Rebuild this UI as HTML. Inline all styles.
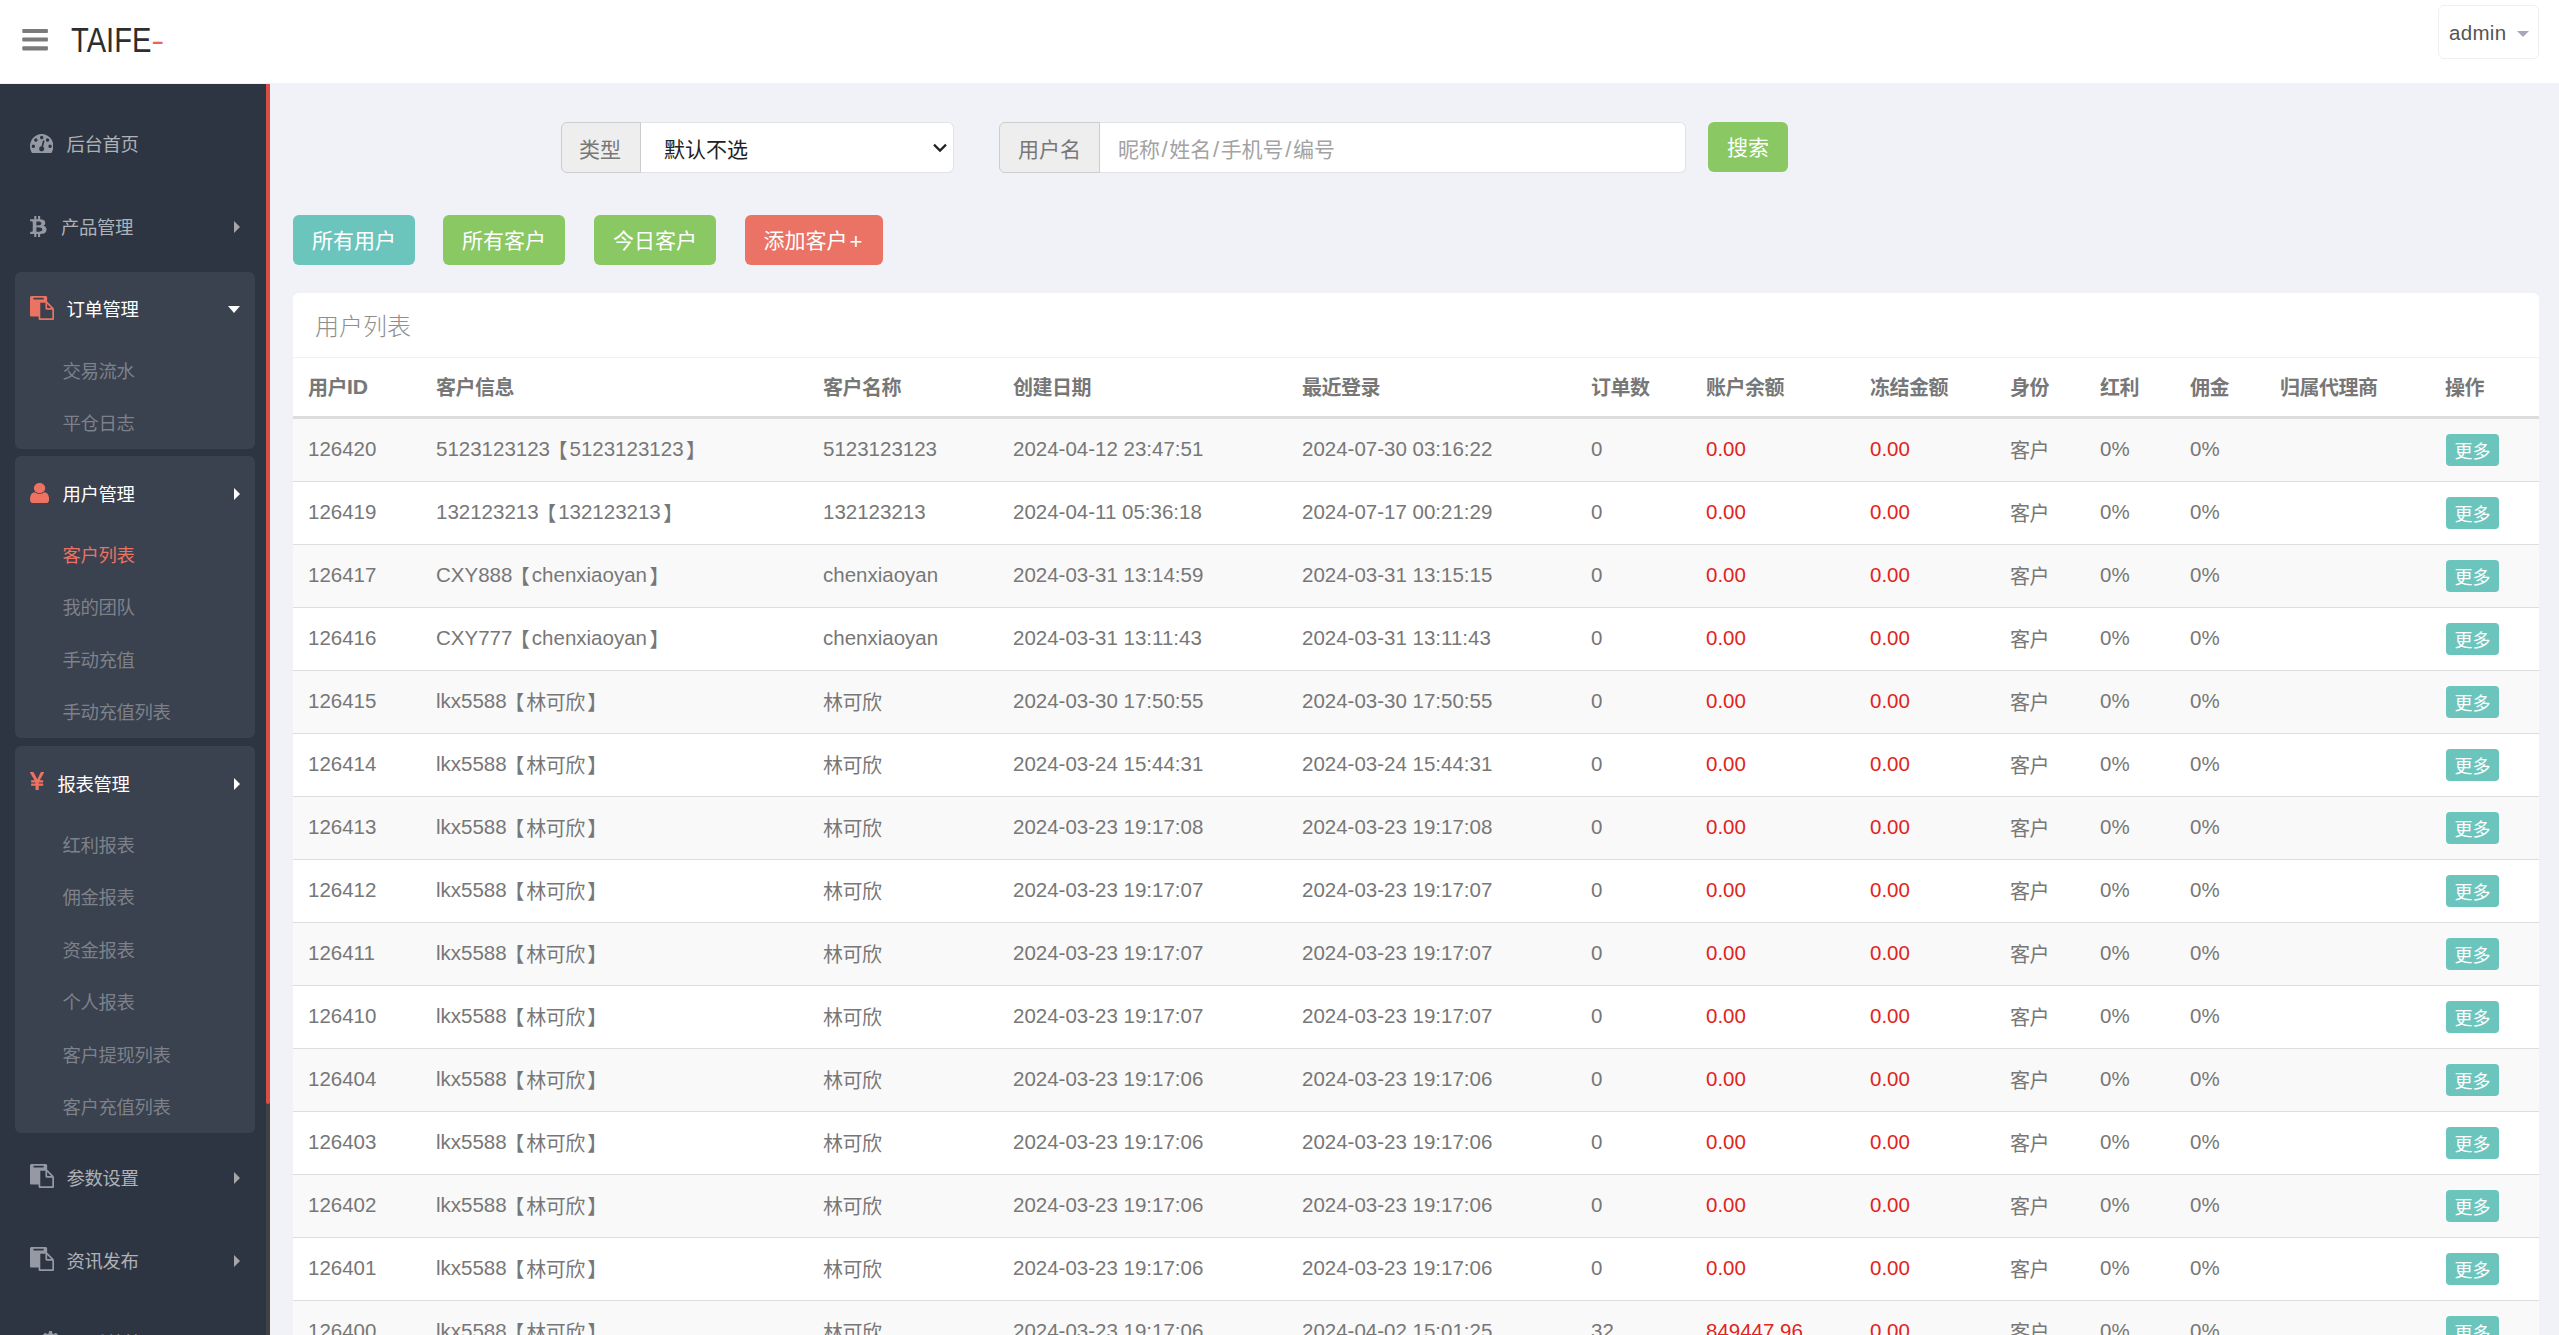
<!DOCTYPE html>
<html lang="zh-CN"><head><meta charset="utf-8"><title>TAIFE</title>
<style>
*{box-sizing:border-box}
html,body{margin:0;padding:0}
body{width:2559px;height:1335px;overflow:hidden;position:relative;background:#f1f2f7;color:#777;
 font-family:"Liberation Sans","Noto Sans CJK SC",sans-serif;font-size:19.5px}
#hd{position:absolute;left:0;top:0;width:2559px;height:83px;background:#fff}
#bars{position:absolute;left:22.3px;top:28.7px;width:26px;height:22px}
#bars i{position:absolute;left:0;width:26px;height:4.3px;background:#7b7b7b;border-radius:1px}
#logo{position:absolute;left:71px;top:16.5px;font-size:34.5px;line-height:46px;color:#2e2e2e;white-space:nowrap;transform:scaleX(.845);transform-origin:0 0;letter-spacing:0}
#logo b{font-weight:normal;color:#ec6459;display:inline-block;transform:translateY(-1.2px) scale(1.34,.8);transform-origin:0 62%;margin-left:.1px}
#adm{position:absolute;left:2438px;top:5px;width:101px;height:54px;border:1px solid #eeeff3;border-radius:6px;background:#fff}
#adm span{position:absolute;left:10px;top:11px;font-size:20.5px;line-height:32px;color:#555;letter-spacing:.3px}
#adm i{position:absolute;left:78px;top:25px;border:6px solid transparent;border-top:6px solid #a5a8b8;border-bottom:0}
#sb{position:absolute;left:0;top:84px;width:270px;height:1251px;background:#2e3542;overflow:hidden;font-size:18.4px;letter-spacing:-.4px}
#rail{position:absolute;left:266px;top:0;width:4px;height:1252px;background:#424242}
#thumb{position:absolute;left:266px;top:0;width:4px;height:1020px;background:#d84e44;border-radius:0 0 2px 2px}
.li{position:absolute;left:15px;width:240px;border-radius:6px;color:#aeb2b7}
.li.open{background:#3a414f;color:#fff}
.ic{position:absolute}
.t{position:absolute;top:25.7px;margin-left:.6px;line-height:26px;white-space:nowrap}
.s{position:absolute;left:47.5px;line-height:26px;margin-top:14.9px;color:#7d818a;white-space:nowrap}
.s.act{color:#ec7262}
.ar{position:absolute;left:219px;top:31.5px;border:6px solid transparent;border-left:6.5px solid #a6a6a6;border-right:0}
.ad{position:absolute;left:213px;top:34px;border:6.2px solid transparent;border-top:7.4px solid #fff;border-bottom:0}
.ig{position:absolute;top:122px;height:51px;font-size:21px}
.ig .ad2{position:absolute;left:0;top:0;height:51px;background:#eee;border:1px solid #ccc;border-radius:6px 0 0 6px;color:#777;text-align:center;line-height:53px}
.ig .fc{position:absolute;top:0;height:51px;background:#fff;border:1px solid #e2e2e4;border-left:0;border-radius:0 6px 6px 0;line-height:53px;white-space:nowrap}
.btn{position:absolute;height:50px;border-radius:6px;color:#fff;font-size:21px;line-height:51px;text-align:center;white-space:nowrap}
#pn{position:absolute;left:293px;top:293px;width:2246px;height:1100px;background:#fff;border-radius:6px 6px 0 0}
#ph{position:absolute;left:0;top:0;width:2246px;height:65px;border-bottom:1px solid #eff2f7;font-size:24px;line-height:68px;padding-left:22px;color:#8e8e8e;font-weight:300}
table{position:absolute;left:0;top:65px;width:2246px;border-collapse:collapse;table-layout:fixed}
th,td{padding:0 0 0 15px;text-align:left;white-space:nowrap;overflow:hidden;line-height:28px;font-size:20px;letter-spacing:-.5px}
th{height:59.5px;padding-top:1px;border-bottom:3px solid #ddd;font-weight:bold;color:#777;vertical-align:middle}
td{height:63px;border-top:1px solid #ddd;vertical-align:middle;padding-top:2.4px}
tbody tr:first-child td{border-top:0;height:63.5px}
tbody tr:nth-child(odd) td{background:#f9f9f9}
.bl{margin-left:-2.5px;margin-right:2.5px}.br{margin-left:2.5px}
.sl{font-size:22px;margin:0 1.6px}
.l{font-size:20.5px;line-height:1px;position:relative;top:-2.2px;letter-spacing:0}
th .l{top:-.3px;font-size:21px;-webkit-text-stroke:.15px #777}
td.r{color:#e2241d}
.more{position:relative;left:1px;top:-.7px;display:inline-block;width:53px;height:32px;border-radius:4px;background:#6cc5bd;color:#fff;font-size:18px;line-height:37px;text-align:center;vertical-align:middle;letter-spacing:0}
</style></head><body>
<div id="hd">
 <svg id="bars" viewBox="0 0 26 22"><rect x="0.3" y="0" width="25.6" height="4.1" rx=".8" fill="#7b7b7b"/><rect x="0.3" y="8.55" width="25.6" height="4" rx=".8" fill="#7b7b7b"/><rect x="0.3" y="17.3" width="25.6" height="4.1" rx=".8" fill="#7b7b7b"/></svg>
 <div id="logo">TAIFE<b>-</b></div>
 <div id="adm"><span>admin</span><i></i></div>
</div>
<div id="sb">
<div style="position:absolute;left:0;top:-84px;width:270px">
<div class="li" style="top:107px;height:75px"><svg class="ic" style="left:14.8px;top:27px" width="23.4" height="19.2" viewBox="0 256 1792 1408" preserveAspectRatio="none"><path fill="#9599a3" d="M384 1152q0-53-37.500-90.500t-90.500-37.500-90.500 37.500-37.500 90.500 37.500 90.500 90.500 37.500 90.500-37.500 37.500-90.500zm192-448q0-53-37.500-90.500t-90.500-37.500-90.500 37.500-37.500 90.500 37.500 90.500 90.500 37.500 90.500-37.500 37.500-90.500zm428 481l101-382q6-26-7.500-48.500t-38.500-29.500-48 6.500-30 39.500l-101 382q-60 5-107 43.500t-63 98.500q-20 77 20 146t117 89 146-20 89-117q16-60-6-117t-72-91zm660-33q0-53-37.500-90.500t-90.500-37.500-90.500 37.500-37.500 90.500 37.500 90.500 90.500 37.500 90.500-37.500 37.500-90.500zm-640-640q0-53-37.500-90.500t-90.500-37.500-90.500 37.500-37.500 90.500 37.500 90.500 90.500 37.500 90.500-37.500 37.500-90.500zm448 192q0-53-37.500-90.500t-90.500-37.500-90.500 37.500-37.500 90.500 37.500 90.500 90.500 37.500 90.500-37.500 37.500-90.500zm320 448q0 261-141 483-19 29-54 29h-1402q-35 0-54-29-141-221-141-483 0-182 71-348t191-286 286-191 348-71 348 71 286 191 191 286 71 348z"/></svg><span class="t" style="left:51px;margin-top:-0.5px">后台首页</span></div>
<div class="li" style="top:189.5px;height:75px"><svg class="ic" style="left:15.100000000000001px;top:26.3px" width="16.5" height="21.3" viewBox="56 384 1202.4 1664" preserveAspectRatio="none"><path fill="#9599a3" d="M1167 896q18 182-131 258 117 28 175 103t45 214q-7 71-32.500 125t-64.500 89-97 58.500-121.500 34.500-145.500 15v255h-154v-251q-80 0-122-1v252h-154v-255q-18 0-54-.5t-55-.5h-200l31-183h111q50 0 58-51v-402h16q-6-1-16-1v-287q-13-68-89-68h-111v-164l212 1q64 0 97-1v-252h154v247q82-2 122-2v-245h154v252q79 7 140 22.500t113 45 82.500 78 36.500 114.500zm-215 545q0-36-15-64t-37-46-57.500-30.500-65.500-18.500-74-9-69-3-64.500 1-47.500 1v338q8 0 37 .5t48 .5 53-1.500 58.500-4 57-8.500 55.500-14 47.500-21 39.500-30 24.500-40 9.500-51zm-71-476q0-33-12.500-58.500t-30.500-42-48-28-55-16.500-61.500-8-58-2.500-54 1-39.500.5v307q5 0 34.500.5t46.500 0 50-2 55-5.500 51.500-11 48.500-18.500 37-27 27-38.500 9-51z"/></svg><span class="t" style="left:45.5px">产品管理</span><i class="ar" style="border-left-color:#a6a6a6"></i></div>
<div class="li open" style="top:272px;height:177.0px"><svg class="ic" style="left:14.899999999999999px;top:23.8px" width="24" height="24" viewBox="0 0 1792 1792" preserveAspectRatio="none"><path fill="#ec7262" d="M768 1664h896v-640h-416q-40 0-68-28t-28-68v-416h-384v1152zm256-1440v-64q0-13-9.500-22.500t-22.500-9.500h-704q-13 0-22.500 9.500t-9.500 22.500v64q0 13 9.500 22.500t22.500 9.500h704q13 0 22.500-9.500t9.500-22.500zm256 672h299l-299-299v299zm512 128v672q0 40-28 68t-68 28h-960q-40 0-68-28t-28-68v-160h-544q-40 0-68-28t-28-68v-1344q0-40 28-68t68-28h1088q40 0 68 28t28 68v328q21 13 36 28l408 408q28 28 48 76t20 88z"/></svg><span class="t" style="left:51px;margin-top:-0.5px">订单管理</span><i class="ad"></i><span class="s" style="top:72.0px">交易流水</span><span class="s" style="top:124.5px">平仓日志</span></div>
<div class="li open" style="top:456px;height:282.0px"><svg class="ic" style="left:14.899999999999999px;top:26.8px" width="19.1" height="20.4" viewBox="256 128 1280 1536" preserveAspectRatio="none"><path fill="#ec7262" d="M1536 1399q0 109-62.500 187t-150.500 78h-854q-88 0-150.500-78t-62.500-187q0-85 8.500-160.500t31.500-152 58.500-131 94-89 134.500-34.500q131 128 313 128t313-128q76 0 134.500 34.500t94 89 58.500 131 31.500 152 8.500 160.500zm-256-887q0 159-112.500 271.500t-271.500 112.500-271.500-112.500-112.500-271.500 112.500-271.500 271.500-112.500 271.500 112.500 112.500 271.500z"/></svg><span class="t" style="left:47px">用户管理</span><i class="ar" style="border-left-color:#fff"></i><span class="s act" style="top:72.0px">客户列表</span><span class="s" style="top:124.5px">我的团队</span><span class="s" style="top:177.0px">手动充值</span><span class="s" style="top:229.5px">手动充值列表</span></div>
<div class="li open" style="top:746px;height:387.0px"><svg class="ic" style="left:14.899999999999999px;top:25.6px" width="14.2" height="18.5" viewBox="382.5 128 1026.8 1408" preserveAspectRatio="none"><path fill="#ec7262" d="M985.500 1536h-172q-13 0-22.500-9t-9.500-23v-330h-288q-13 0-22.500-9t-9.500-23v-103q0-13 9.500-22.500t22.500-9.500h288v-85h-288q-13 0-22.500-9t-9.500-23v-104q0-13 9.500-22.500t22.500-9.500h214l-321-578q-8-16 0-32 10-16 28-16h194q19 0 29 18l215 425q19 38 56 125 10-24 30.500-68t27.500-61l191-420q8-19 29-19h191q17 0 27 16 9 14 1 31l-313 579h215q13 0 22.500 9.500t9.500 22.500v104q0 14-9.500 23t-22.500 9h-290v85h290q13 0 22.500 9.500t9.500 22.500v103q0 14-9.500 23t-22.500 9h-290v330q0 13-9.500 22.500t-22.500 9.500z"/></svg><span class="t" style="left:42px">报表管理</span><i class="ar" style="border-left-color:#fff"></i><span class="s" style="top:72.0px">红利报表</span><span class="s" style="top:124.5px">佣金报表</span><span class="s" style="top:177.0px">资金报表</span><span class="s" style="top:229.5px">个人报表</span><span class="s" style="top:282.0px">客户提现列表</span><span class="s" style="top:334.5px">客户充值列表</span></div>
<div class="li" style="top:1140.5px;height:75px"><svg class="ic" style="left:14.899999999999999px;top:23.8px" width="24" height="24" viewBox="0 0 1792 1792" preserveAspectRatio="none"><path fill="#9599a3" d="M768 1664h896v-640h-416q-40 0-68-28t-28-68v-416h-384v1152zm256-1440v-64q0-13-9.500-22.500t-22.500-9.500h-704q-13 0-22.500 9.500t-9.500 22.500v64q0 13 9.500 22.500t22.500 9.500h704q13 0 22.500-9.500t9.500-22.500zm256 672h299l-299-299v299zm512 128v672q0 40-28 68t-68 28h-960q-40 0-68-28t-28-68v-160h-544q-40 0-68-28t-28-68v-1344q0-40 28-68t68-28h1088q40 0 68 28t28 68v328q21 13 36 28l408 408q28 28 48 76t20 88z"/></svg><span class="t" style="left:51px">参数设置</span><i class="ar" style="border-left-color:#a6a6a6"></i></div>
<div class="li" style="top:1223px;height:75px"><svg class="ic" style="left:14.899999999999999px;top:23.8px" width="24" height="24" viewBox="0 0 1792 1792" preserveAspectRatio="none"><path fill="#9599a3" d="M768 1664h896v-640h-416q-40 0-68-28t-28-68v-416h-384v1152zm256-1440v-64q0-13-9.500-22.500t-22.500-9.500h-704q-13 0-22.500 9.500t-9.500 22.500v64q0 13 9.500 22.500t22.500 9.500h704q13 0 22.500-9.500t9.500-22.500zm256 672h299l-299-299v299zm512 128v672q0 40-28 68t-68 28h-960q-40 0-68-28t-28-68v-160h-544q-40 0-68-28t-28-68v-1344q0-40 28-68t68-28h1088q40 0 68 28t28 68v328q21 13 36 28l408 408q28 28 48 76t20 88z"/></svg><span class="t" style="left:51px">资讯发布</span><i class="ar" style="border-left-color:#a6a6a6"></i></div>
<div class="li" style="top:1305.5px;height:75px"><svg class="ic" style="left:25.5px;top:25px" width="19" height="19" viewBox="0 0 24 24" preserveAspectRatio="none"><path fill="#9599a3" d="M10.2 0h3.6l.5 3.1 2 .8 2.6-1.800 2.500 2.500-1.800 2.600.800 2 3.100.500v3.600l-3.100.500-.800 2 1.800 2.600-2.500 2.500-2.600-1.800-2 .800-.500 3.100h-3.600l-.500-3.100-2-.800-2.600 1.800-2.500-2.500 1.800-2.600-.800-2-3.100-.500v-3.600l3.100-.500.800-2-1.800-2.600 2.500-2.500 2.600 1.800 2-.800zM12 8a4 4 0 1 0 0 8 4 4 0 0 0 0-8z"/></svg><span class="t" style="left:73px">系统管理</span><i class="ar" style="border-left-color:#a6a6a6"></i></div>
</div>
<div id="rail"></div><div id="thumb"></div>
</div>
<div class="ig" style="left:561px;width:393px"><div class="ad2" style="width:80px;text-indent:-2px">类型</div><div class="fc" style="left:80px;width:313px;padding-left:23px;color:#222">默认不选<svg style="position:absolute;left:292px;top:20px" width="14" height="10" viewBox="0 0 14 10"><path d="M1 1.6 L7 7.6 L13 1.6" fill="none" stroke="#222" stroke-width="2.2"/></svg></div></div>
<div class="ig" style="left:999px;width:687px"><div class="ad2" style="width:101px">用户名</div><div class="fc" style="left:101px;width:586px;padding-left:18px;color:#a3a3a3">昵称<span class="sl">/</span>姓名<span class="sl">/</span>手机号<span class="sl">/</span>编号</div></div>
<div class="btn" style="left:1708px;top:122px;width:80px;background:#8ac863;line-height:52px">搜索</div>
<div class="btn" style="left:293px;top:215px;width:122px;background:#6cc5bd">所有用户</div>
<div class="btn" style="left:443px;top:215px;width:122px;background:#8ac863">所有客户</div>
<div class="btn" style="left:594px;top:215px;width:122px;background:#8ac863">今日客户</div>
<div class="btn" style="left:745px;top:215px;width:138px;background:#ea7366;text-align:left;padding-left:18.5px">添加客户<span style="font-size:22px;margin-left:2px;position:relative;top:1px">+</span></div>
<div id="pn"><div id="ph">用户列表</div>
<table><colgroup><col style="width:128px"><col style="width:387px"><col style="width:190px"><col style="width:289px"><col style="width:289px"><col style="width:115px"><col style="width:164px"><col style="width:140px"><col style="width:90px"><col style="width:90px"><col style="width:90px"><col style="width:165px"><col style="width:109px"></colgroup>
<thead><tr><th>用户<span class="l">ID</span></th><th>客户信息</th><th>客户名称</th><th>创建日期</th><th>最近登录</th><th>订单数</th><th>账户余额</th><th>冻结金额</th><th>身份</th><th>红利</th><th>佣金</th><th>归属代理商</th><th>操作</th></tr></thead>
<tbody>
<tr><td><span class="l">126420</span></td><td><span class="l">5123123123</span><span class="bl">【</span><span class=l>5123123123</span><span class="br">】</span></td><td><span class="l">5123123123</span></td><td><span class="l">2024-04-12 23:47:51</span></td><td><span class="l">2024-07-30 03:16:22</span></td><td><span class="l">0</span></td><td class="r"><span class="l">0.00</span></td><td class="r"><span class="l">0.00</span></td><td>客户</td><td><span class="l">0%</span></td><td><span class="l">0%</span></td><td></td><td><a class="more">更多</a></td></tr>
<tr><td><span class="l">126419</span></td><td><span class="l">132123213</span><span class="bl">【</span><span class=l>132123213</span><span class="br">】</span></td><td><span class="l">132123213</span></td><td><span class="l">2024-04-11 05:36:18</span></td><td><span class="l">2024-07-17 00:21:29</span></td><td><span class="l">0</span></td><td class="r"><span class="l">0.00</span></td><td class="r"><span class="l">0.00</span></td><td>客户</td><td><span class="l">0%</span></td><td><span class="l">0%</span></td><td></td><td><a class="more">更多</a></td></tr>
<tr><td><span class="l">126417</span></td><td><span class="l">CXY888</span><span class="bl">【</span><span class=l>chenxiaoyan</span><span class="br">】</span></td><td><span class="l">chenxiaoyan</span></td><td><span class="l">2024-03-31 13:14:59</span></td><td><span class="l">2024-03-31 13:15:15</span></td><td><span class="l">0</span></td><td class="r"><span class="l">0.00</span></td><td class="r"><span class="l">0.00</span></td><td>客户</td><td><span class="l">0%</span></td><td><span class="l">0%</span></td><td></td><td><a class="more">更多</a></td></tr>
<tr><td><span class="l">126416</span></td><td><span class="l">CXY777</span><span class="bl">【</span><span class=l>chenxiaoyan</span><span class="br">】</span></td><td><span class="l">chenxiaoyan</span></td><td><span class="l">2024-03-31 13:11:43</span></td><td><span class="l">2024-03-31 13:11:43</span></td><td><span class="l">0</span></td><td class="r"><span class="l">0.00</span></td><td class="r"><span class="l">0.00</span></td><td>客户</td><td><span class="l">0%</span></td><td><span class="l">0%</span></td><td></td><td><a class="more">更多</a></td></tr>
<tr><td><span class="l">126415</span></td><td><span class="l">lkx5588</span><span class="bl">【</span>林可欣<span class="br">】</span></td><td>林可欣</td><td><span class="l">2024-03-30 17:50:55</span></td><td><span class="l">2024-03-30 17:50:55</span></td><td><span class="l">0</span></td><td class="r"><span class="l">0.00</span></td><td class="r"><span class="l">0.00</span></td><td>客户</td><td><span class="l">0%</span></td><td><span class="l">0%</span></td><td></td><td><a class="more">更多</a></td></tr>
<tr><td><span class="l">126414</span></td><td><span class="l">lkx5588</span><span class="bl">【</span>林可欣<span class="br">】</span></td><td>林可欣</td><td><span class="l">2024-03-24 15:44:31</span></td><td><span class="l">2024-03-24 15:44:31</span></td><td><span class="l">0</span></td><td class="r"><span class="l">0.00</span></td><td class="r"><span class="l">0.00</span></td><td>客户</td><td><span class="l">0%</span></td><td><span class="l">0%</span></td><td></td><td><a class="more">更多</a></td></tr>
<tr><td><span class="l">126413</span></td><td><span class="l">lkx5588</span><span class="bl">【</span>林可欣<span class="br">】</span></td><td>林可欣</td><td><span class="l">2024-03-23 19:17:08</span></td><td><span class="l">2024-03-23 19:17:08</span></td><td><span class="l">0</span></td><td class="r"><span class="l">0.00</span></td><td class="r"><span class="l">0.00</span></td><td>客户</td><td><span class="l">0%</span></td><td><span class="l">0%</span></td><td></td><td><a class="more">更多</a></td></tr>
<tr><td><span class="l">126412</span></td><td><span class="l">lkx5588</span><span class="bl">【</span>林可欣<span class="br">】</span></td><td>林可欣</td><td><span class="l">2024-03-23 19:17:07</span></td><td><span class="l">2024-03-23 19:17:07</span></td><td><span class="l">0</span></td><td class="r"><span class="l">0.00</span></td><td class="r"><span class="l">0.00</span></td><td>客户</td><td><span class="l">0%</span></td><td><span class="l">0%</span></td><td></td><td><a class="more">更多</a></td></tr>
<tr><td><span class="l">126411</span></td><td><span class="l">lkx5588</span><span class="bl">【</span>林可欣<span class="br">】</span></td><td>林可欣</td><td><span class="l">2024-03-23 19:17:07</span></td><td><span class="l">2024-03-23 19:17:07</span></td><td><span class="l">0</span></td><td class="r"><span class="l">0.00</span></td><td class="r"><span class="l">0.00</span></td><td>客户</td><td><span class="l">0%</span></td><td><span class="l">0%</span></td><td></td><td><a class="more">更多</a></td></tr>
<tr><td><span class="l">126410</span></td><td><span class="l">lkx5588</span><span class="bl">【</span>林可欣<span class="br">】</span></td><td>林可欣</td><td><span class="l">2024-03-23 19:17:07</span></td><td><span class="l">2024-03-23 19:17:07</span></td><td><span class="l">0</span></td><td class="r"><span class="l">0.00</span></td><td class="r"><span class="l">0.00</span></td><td>客户</td><td><span class="l">0%</span></td><td><span class="l">0%</span></td><td></td><td><a class="more">更多</a></td></tr>
<tr><td><span class="l">126404</span></td><td><span class="l">lkx5588</span><span class="bl">【</span>林可欣<span class="br">】</span></td><td>林可欣</td><td><span class="l">2024-03-23 19:17:06</span></td><td><span class="l">2024-03-23 19:17:06</span></td><td><span class="l">0</span></td><td class="r"><span class="l">0.00</span></td><td class="r"><span class="l">0.00</span></td><td>客户</td><td><span class="l">0%</span></td><td><span class="l">0%</span></td><td></td><td><a class="more">更多</a></td></tr>
<tr><td><span class="l">126403</span></td><td><span class="l">lkx5588</span><span class="bl">【</span>林可欣<span class="br">】</span></td><td>林可欣</td><td><span class="l">2024-03-23 19:17:06</span></td><td><span class="l">2024-03-23 19:17:06</span></td><td><span class="l">0</span></td><td class="r"><span class="l">0.00</span></td><td class="r"><span class="l">0.00</span></td><td>客户</td><td><span class="l">0%</span></td><td><span class="l">0%</span></td><td></td><td><a class="more">更多</a></td></tr>
<tr><td><span class="l">126402</span></td><td><span class="l">lkx5588</span><span class="bl">【</span>林可欣<span class="br">】</span></td><td>林可欣</td><td><span class="l">2024-03-23 19:17:06</span></td><td><span class="l">2024-03-23 19:17:06</span></td><td><span class="l">0</span></td><td class="r"><span class="l">0.00</span></td><td class="r"><span class="l">0.00</span></td><td>客户</td><td><span class="l">0%</span></td><td><span class="l">0%</span></td><td></td><td><a class="more">更多</a></td></tr>
<tr><td><span class="l">126401</span></td><td><span class="l">lkx5588</span><span class="bl">【</span>林可欣<span class="br">】</span></td><td>林可欣</td><td><span class="l">2024-03-23 19:17:06</span></td><td><span class="l">2024-03-23 19:17:06</span></td><td><span class="l">0</span></td><td class="r"><span class="l">0.00</span></td><td class="r"><span class="l">0.00</span></td><td>客户</td><td><span class="l">0%</span></td><td><span class="l">0%</span></td><td></td><td><a class="more">更多</a></td></tr>
<tr><td><span class="l">126400</span></td><td><span class="l">lkx5588</span><span class="bl">【</span>林可欣<span class="br">】</span></td><td>林可欣</td><td><span class="l">2024-03-23 19:17:06</span></td><td><span class="l">2024-04-02 15:01:25</span></td><td><span class="l">32</span></td><td class="r"><span class="l">849447.96</span></td><td class="r"><span class="l">0.00</span></td><td>客户</td><td><span class="l">0%</span></td><td><span class="l">0%</span></td><td></td><td><a class="more">更多</a></td></tr>
</tbody></table></div>
</body></html>
